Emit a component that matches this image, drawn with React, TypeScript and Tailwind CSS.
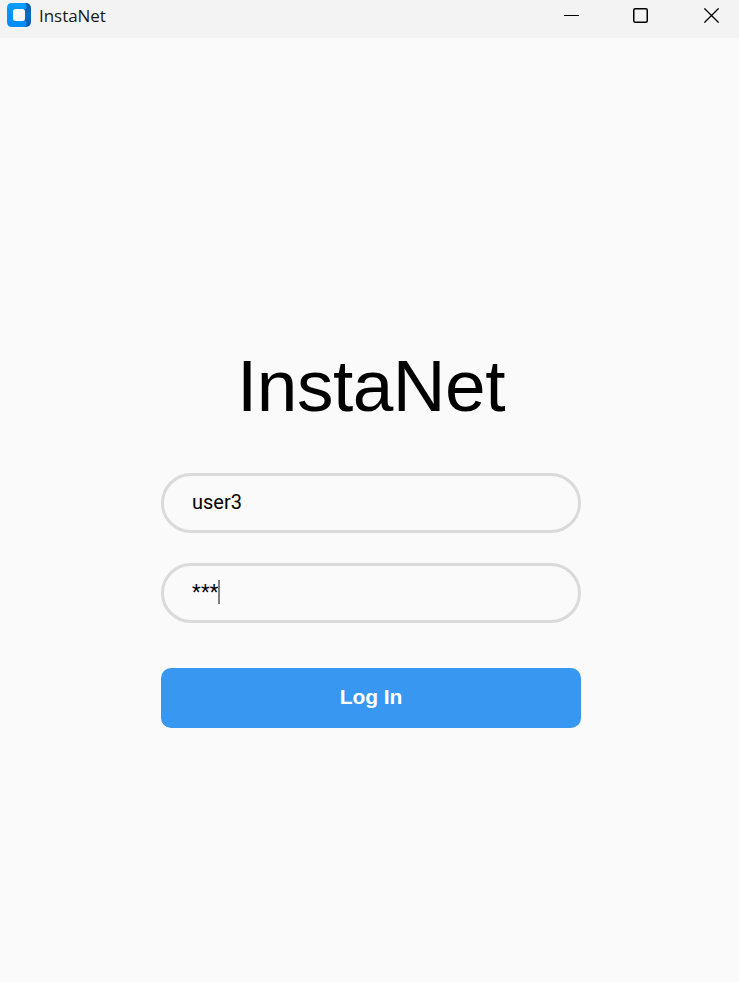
function AppIcon() {
  return (
    <svg width="24" height="24" viewBox="0 0 24 24" className="shrink-0">
      <defs>
        <linearGradient id="side" x1="0" y1="0" x2="0" y2="1">
          <stop offset="0" stopColor="#0a55a0" />
          <stop offset="0.5" stopColor="#0870c8" />
          <stop offset="1" stopColor="#0a55a0" />
        </linearGradient>
        <linearGradient id="body" x1="0" y1="0" x2="0" y2="1">
          <stop offset="0" stopColor="#0a9cff" />
          <stop offset="1" stopColor="#008cf8" />
        </linearGradient>
      </defs>
      <rect x="8" width="16" height="24" rx="5" fill="url(#side)" />
      <path d="M5 0H17Q19.5 0 19.5 3V4Q19.5 6.5 17 6.5V17.5Q19.5 17.5 19.5 20V21Q19.5 24 17 24H5Q0 24 0 19V5Q0 0 5 0Z" fill="url(#body)" />
      <rect x="6" y="6" width="12" height="12" rx="2.5" fill="#f9f9f9" />
    </svg>
  );
}

function TitleBar() {
  return (
    <header className="flex h-[38px] items-start bg-[#f3f3f3] pl-[7px] pr-5">
      <div className="flex h-[30px] items-center gap-2">
        <AppIcon />
        <span className="pt-0.5 font-['Open_Sans','Noto_Sans',sans-serif] text-[17px] leading-6 tracking-[-0.05px] text-[#191919]">InstaNet</span>
      </div>
      <div className="ml-auto flex h-[31px] items-center text-black">
        <svg width="15" height="15" viewBox="0 0 15 15" className="mr-[54px]">
          <path d="M0 7.5H15" stroke="currentColor" />
        </svg>
        <svg width="15" height="15" viewBox="0 0 15 15" className="mr-14">
          <rect x="0.75" y="0.75" width="13.5" height="13.5" rx="1.5" fill="none" stroke="currentColor" strokeWidth="1.5" />
        </svg>
        <svg width="15" height="15" viewBox="0 0 15 15">
          <path d="M0.4 0.4L14.6 14.6M14.6 0.4L0.4 14.6" stroke="currentColor" strokeWidth="1.3" />
        </svg>
      </div>
    </header>
  );
}

function Field({ value, masked = false }: { value: string; masked?: boolean }) {
  return (
    <div className="flex h-[60px] items-center rounded-[30px] border-[3px] border-[#dadada] px-7 pb-0.5 font-[Roboto,sans-serif] text-xl leading-6 text-black">
      <span className={masked ? "tracking-[0.3px]" : ""}>{value}</span>
      {masked && <span className="-ml-px h-6 w-0.5 bg-[#808080]" />}
    </div>
  );
}

export default function App() {
  return (
    <div className="flex h-[982px] w-[739px] flex-col overflow-hidden bg-[#fafafa]">
      <TitleBar />
      <main className="ml-[161px] flex w-[420px] flex-col pt-[307px]">
        <h1 className="h-32 text-center font-['Liberation_Sans',Arial,sans-serif] text-[73px] leading-[82px] tracking-[-0.5px] text-black">InstaNet</h1>
        <div className="flex flex-col gap-[30px]">
          <Field value="user3" />
          <Field value="***" masked />
        </div>
        <button className="mt-[45px] h-[60px] rounded-[10px] bg-[#3897f1] pb-0.5 font-['Liberation_Sans',Arial,sans-serif] text-[21px] font-bold leading-6 tracking-[-0.1px] text-white">
          Log In
        </button>
      </main>
    </div>
  );
}
